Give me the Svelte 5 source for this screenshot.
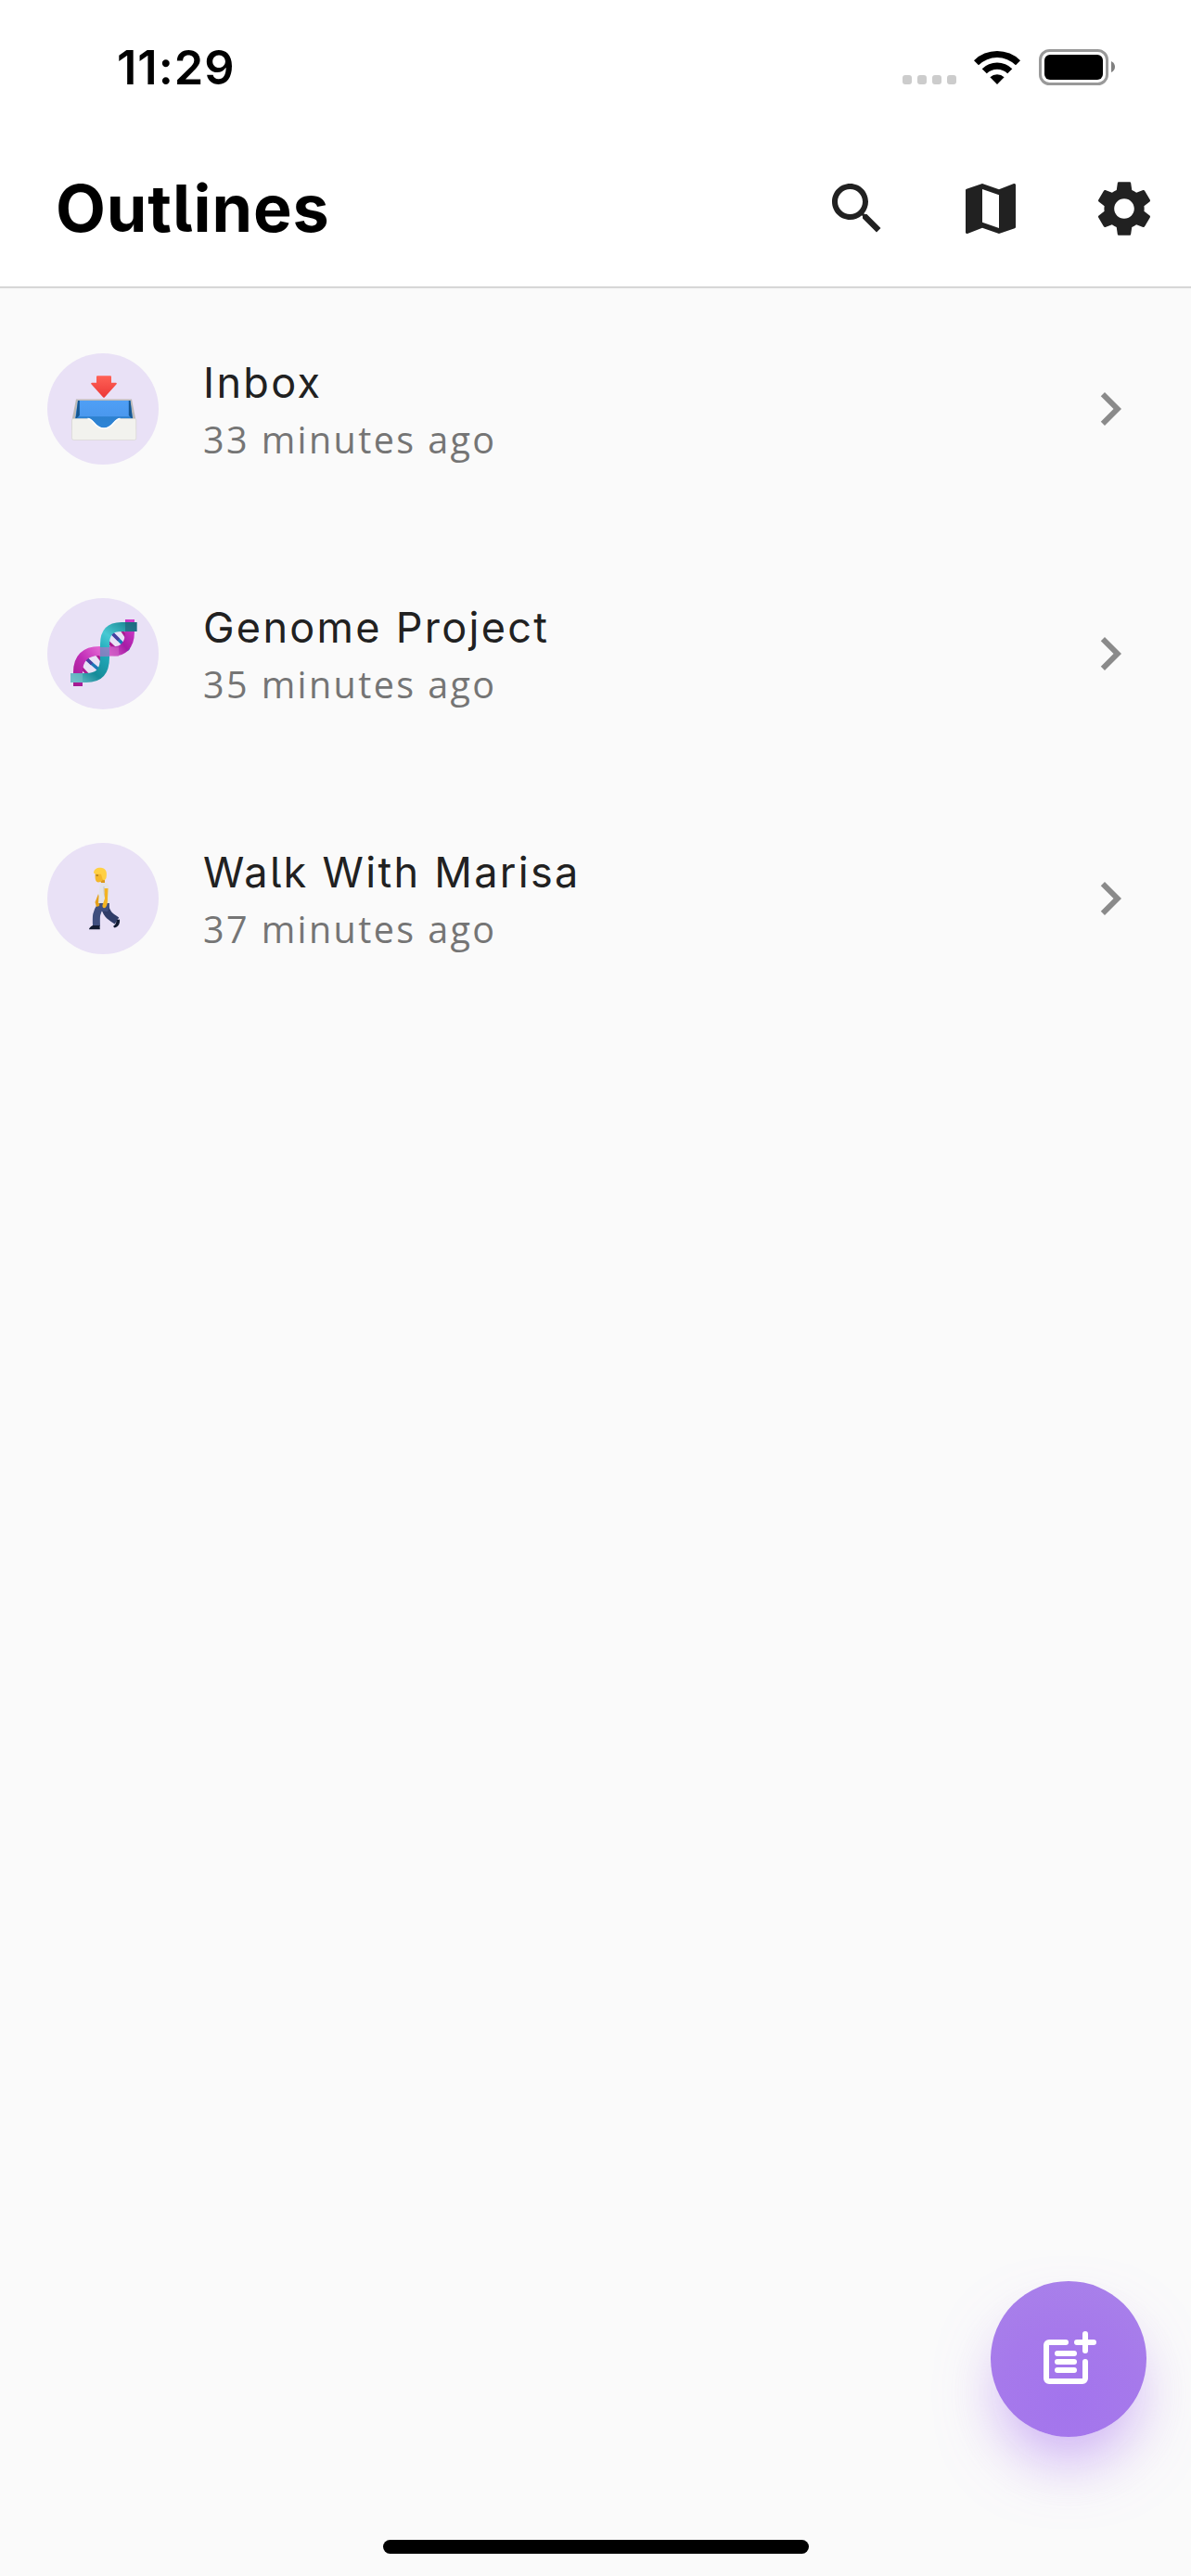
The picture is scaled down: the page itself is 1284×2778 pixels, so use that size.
<script>
  const outlines = [
    { icon: 'inbox', title: 'Inbox', edited: '33 minutes ago' },
    { icon: 'dna', title: 'Genome Project', edited: '35 minutes ago' },
    { icon: 'walk', title: 'Walk With Marisa', edited: '37 minutes ago' }
  ];
</script>

<div class="screen">
  <header>
    <div class="status">
      <time>11:29</time>
      <div class="indicators">
        <div class="dots"><i></i><i></i><i></i><i></i></div>
        <svg class="wifi" viewBox="0 0 50 37">
          <path d="M0 11.2a35.6 35.6 0 0 1 50 0l-5 5.1a28.4 28.4 0 0 0-40 0z" />
          <path d="M8.7 20.2a23.2 23.2 0 0 1 32.6 0l-5.1 5.1a16 16 0 0 0-22.4 0z" />
          <path d="M17.4 29.2a11 11 0 0 1 15.2 0L25 37z" />
        </svg>
        <svg class="battery" viewBox="0 0 82 39">
          <rect x="1.5" y="1.5" width="72" height="36" rx="10" fill="none" stroke="#999" stroke-width="3" />
          <rect x="6" y="6" width="63" height="27" rx="6" />
          <path d="M78 13q4 2 4 6t-4 6z" fill="#808080" />
        </svg>
      </div>
    </div>
    <div class="appbar">
      <h1>Outlines</h1>
      <nav>
        <button aria-label="Search">
          <svg viewBox="0 0 24 24"><path d="M15.5 14h-.79l-.28-.27C15.41 12.59 16 11.11 16 9.5 16 5.91 13.09 3 9.5 3S3 5.91 3 9.5 5.91 16 9.5 16c1.61 0 3.09-.59 4.23-1.57l.27.28v.79l5 4.99L20.49 19l-4.99-5zm-6 0C7.01 14 5 11.99 5 9.5S7.01 5 9.5 5 14 7.01 14 9.5 11.99 14 9.5 14z" /></svg>
        </button>
        <button aria-label="Map">
          <svg viewBox="0 0 24 24"><path d="M20.5 3l-.16.03L15 5.1 9 3 3.36 4.9c-.21.07-.36.25-.36.48V20.5c0 .28.22.5.5.5l.16-.03L9 18.9l6 2.1 5.64-1.9c.21-.07.36-.25.36-.48V3.5c0-.28-.22-.5-.5-.5zM15 19l-6-2.11V5l6 2.11V19z" /></svg>
        </button>
        <button aria-label="Settings">
          <svg viewBox="0 0 24 24"><path d="M19.14 12.94c.04-.3.06-.61.06-.94 0-.32-.02-.64-.07-.94l2.03-1.58c.18-.14.23-.41.12-.61l-1.92-3.32c-.12-.22-.37-.29-.59-.22l-2.39.96c-.5-.38-1.03-.7-1.62-.94l-.36-2.54c-.04-.24-.24-.41-.48-.41h-3.84c-.24 0-.43.17-.47.41l-.36 2.54c-.59.24-1.13.57-1.62.94l-2.39-.96c-.22-.08-.47 0-.59.22L2.74 8.87c-.12.21-.08.47.12.61l2.03 1.58c-.05.3-.09.63-.09.94s.02.64.07.94l-2.03 1.58c-.18.14-.23.41-.12.61l1.92 3.32c.12.22.37.29.59.22l2.39-.96c.5.38 1.03.7 1.62.94l.36 2.54c.05.24.24.41.48.41h3.84c.24 0 .44-.17.47-.41l.36-2.54c.59-.24 1.13-.56 1.62-.94l2.39.96c.22.08.47 0 .59-.22l1.92-3.32c.12-.22.07-.47-.12-.61l-2.01-1.58zM12 15.6c-1.98 0-3.6-1.62-3.6-3.6s1.62-3.6 3.6-3.6 3.6 1.62 3.6 3.6-1.62 3.6-3.6 3.6z" /></svg>
        </button>
      </nav>
    </div>
  </header>

  <main>
    {#each outlines as item}
      <article>
        <div class="avatar">
          {#if item.icon === 'inbox'}
            <svg viewBox="1 1 140 140">
              <defs>
                <linearGradient id="tray" x2="0" y2="1"><stop stop-color="#4f9ff5" /><stop offset=".54" stop-color="#4a98ee" /><stop offset=".57" stop-color="#2c80cf" /><stop offset="1" stop-color="#2e86d8" /></linearGradient>
                <linearGradient id="arrow" x2="0" y2="1"><stop stop-color="#ff6257" /><stop offset="1" stop-color="#ec3836" /></linearGradient>
              </defs>
              <path d="M42 60.5h60l4.500 23v10h-69v-10z" fill="#bdbab8" />
              <path d="M44 62h56.500l2.500 20v11H41V82z" fill="url(#tray)" />
              <path d="M44 62h1.800v16L41.500 82zM98.800 62h1.700l2.500 20-4.200-4z" fill="#155691" />
              <path d="M39 81.500h15.500c7 0 7 10.500 17.500 10.500s10.500-10.500 17.500-10.500H105.500q1.300 0 1.300 1.500v19.500q0 2-2 2H39.500q-2 0-2-2V83q0-1.500 1.500-1.500z" fill="#f2f2ee" stroke="#d8d7d3" stroke-width=".7" />
              <path d="M54.500 81.500c7 0 7 10.500 17.500 10.500s10.500-10.500 17.500-10.500" fill="none" stroke="#fff" stroke-width="1.600" />
              <path d="M65 35.300h14q1 0 1 1v6.500h5q1.500.3.600 1.500L73 58.200q-1 1-2 0L58.400 44.300q-.9-1.200.6-1.500h5v-6.500q0-1 1-1z" fill="url(#arrow)" />
            </svg>
          {:else if item.icon === 'dna'}
            <svg viewBox="1 1 140 140">
              <defs>
                <linearGradient id="teal" x1="1" y1="0" x2="0" y2="1"><stop stop-color="#16818d" /><stop offset=".3" stop-color="#48c9d3" /><stop offset=".5" stop-color="#20aaba" /><stop offset=".78" stop-color="#168b99" /><stop offset="1" stop-color="#6bbfc9" /></linearGradient>
                <linearGradient id="pink" x1="1" y1="0" x2="0" y2="1"><stop stop-color="#d23bcb" /><stop offset=".25" stop-color="#a51ca5" /><stop offset=".5" stop-color="#e466d2" /><stop offset=".75" stop-color="#c02db7" /><stop offset="1" stop-color="#a51992" /></linearGradient>
              </defs>
              <g fill="none">
                <path d="M79 47l20 20M50 74l21 18" stroke="#1c76b8" stroke-width="3.500" />
                <path d="M80 48l8 8M51 74l8 8" stroke="#4840a0" stroke-width="3.500" />
                <path d="M73 55l15 14M89 42l12 18M61 67l12 16M43 81l15 16" stroke="#a91d91" stroke-width="3.200" />
                <path d="M100 34v13c0 17-9 22-19 21H67C52 68 44 76 44 91v15" stroke="url(#pink)" stroke-width="10" />
                <path d="M107.500 42H91C78 42 73 49 73 61v14c0 16-7 22-20 22H36" stroke="url(#teal)" stroke-width="10" />
                <path d="M67 69h21" stroke="#cf65c7" stroke-opacity=".55" stroke-width="10" />
              </g>
              <path d="M95 37h12.500v10H95z" fill="#24617c" opacity=".65" />
              <path d="M36 92h13v10H36z" fill="#75bcc8" opacity=".6" />
            </svg>
          {:else}
            <svg viewBox="1 1 140 140">
              <path d="M73 78c1 9 5 12 13 17" stroke="#303d68" stroke-width="8.500" fill="none" />
              <path d="M68.500 79c-5 7-5 11-4.500 22" stroke="#3f4e7e" stroke-width="8" fill="none" />
              <path d="M65 76h13q.5 5-2 9l-12-1z" fill="#40507f" />
              <path d="M60 100h7.500l.3 4.200H56q0-2 4-4.200zM86 94l3-.5c.5 4-1 8-5.500 9l-1.500-1.500c3-2 3-4 4-7z" fill="#111a30" />
              <path d="M66 66l-3.500 9 1.500 5 3-1 1-8z" fill="#e5a01b" />
              <path d="M69 54h5c3.500 1 4.500 6 4 11v11H66c1-7 0-17 3-22z" fill="#e2e3e8" />
              <path d="M72 58c0 5 0 9 1.500 12" stroke="#c3c5cd" fill="none" />
              <path d="M72.500 60h4l-.5 10c0 4 0 8-2 10.500-2 1.500-4 .5-3.500-2.500l2.500-7z" fill="#f3b421" />
              <path d="M67 49h6v5h-4z" fill="#db981a" />
              <path d="M62.700 42c0 5-1 10.500 3 11.500 5 0 8-5 8-11.500z" fill="#f4b72b" />
              <path d="M61 43.500c0-4 3.500-6 8-5.700 6 .5 6.500 6 5.500 11-1 3-3 3.200-4 1l-1.500-5c-3 0-6 0-8-1.300z" fill="#ffd044" />
              <path d="M63.500 46h2.500" stroke="#8c5f18" fill="none" />
            </svg>
          {/if}
        </div>
        <div class="copy">
          <h2>{item.title}</h2>
          <p>{item.edited}</p>
        </div>
        <svg class="chevron" viewBox="0 0 24 24"><path d="M10 6 8.590 7.410 13.170 12l-4.580 4.590L10 18l6-6z" /></svg>
      </article>
    {/each}
  </main>

  <footer>
    <button class="fab" aria-label="New outline">
      <svg viewBox="0 0 24 24">
        <path d="M11 6H5a1 1 0 0 0-1 1v12a1 1 0 0 0 1 1h12a1 1 0 0 0 1-1v-6M18 3v6M15 6h6M8 10h6M8 13h6M8 16h6" fill="none" stroke="#fff" stroke-width="2" stroke-linecap="round" />
      </svg>
    </button>
    <div class="home"></div>
  </footer>
</div>

<style>
  :global(body) { margin: 0; }
  .screen {
    width: 1284px;
    height: 2778px;
    display: flex;
    flex-direction: column;
    background: #fafafa;
    font-family: Inter, "Liberation Sans", sans-serif;
    overflow: hidden;
  }
  svg { display: block; }
  button { border: 0; padding: 0; background: none; }
  header {
    box-sizing: border-box;
    height: 309px;
    flex: none;
    background: #fff;
    box-shadow: 0 1px 0 #c8c8c8, 0 2px 1px #e4e4e4;
  }
  .status {
    height: 141px;
    display: flex;
    justify-content: space-between;
    align-items: flex-start;
    padding: 0 82px 0 126px;
  }
  time {
    padding-top: 43px;
    font-size: 50.5px;
    line-height: 60px;
    font-weight: 600;
    letter-spacing: 1px;
  }
  .indicators { display: flex; align-items: flex-end; height: 92px; }
  .dots { display: flex; gap: 6px; margin: 0 19px 1px 0; }
  .dots i { width: 10px; height: 10px; border-radius: 3px; background: #ccc; }
  .wifi { width: 50px; height: 37px; margin: 0 20px 1px 0; }
  .battery { width: 82px; height: 39px; }
  .appbar {
    height: 168px;
    display: flex;
    align-items: center;
    justify-content: space-between;
    padding: 0 36px 0 60px;
  }
  h1 {
    margin: 0;
    font-size: 70px;
    line-height: 84px;
    font-weight: 700;
    letter-spacing: 0.9px;
    font-feature-settings: "cv05";
  }
  nav { display: flex; gap: 72px; }
  nav svg { width: 72px; height: 72px; fill: #212121; }
  main { flex: 1; }
  article {
    height: 264px;
    display: flex;
    align-items: center;
    padding: 0 51px;
  }
  .avatar { width: 120px; height: 120px; border-radius: 50%; background: #e9e1f6; display: grid; place-items: center; }
  .avatar svg { width: 140px; height: 140px; margin: -10px; }
  .copy { flex: 1; margin-left: 48px; padding-top: 4px; }
  h2, p { margin: 0; font-weight: 400; white-space: nowrap; }
  h2 { font-size: 45px; line-height: 62px; color: #212121; letter-spacing: 2.3px; font-feature-settings: "cv05"; }
  p { font-family: "Open Sans", sans-serif; font-size: 39.5px; line-height: 60px; color: #757575; letter-spacing: 2.4px; }
  .chevron { width: 72px; height: 72px; fill: #8a8a8a; }
  footer {
    flex: none;
    height: 318px;
    display: flex;
    flex-direction: column;
    justify-content: space-between;
  }
  .fab {
    align-self: flex-end;
    margin-right: 48px;
    width: 168px;
    height: 168px;
    border-radius: 50%;
    display: grid;
    place-items: center;
    background: radial-gradient(circle at 50% 77%, #a374ed 0, #a679eb 50%, #a983ea 100%);
    box-shadow: 0 36px 66px -12px rgba(163, 105, 240, .55);
  }
  .fab svg { width: 72px; height: 72px; }
  .home { width: 459px; height: 15px; border-radius: 8px; background: #000; align-self: center; margin-bottom: 24px; }
</style>
